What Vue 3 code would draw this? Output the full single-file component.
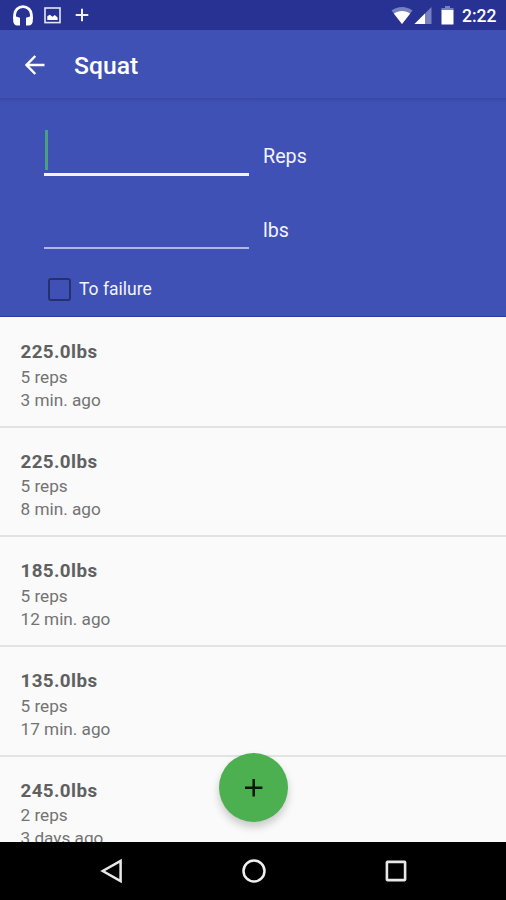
<script setup>
import { ref } from 'vue'

const reps = ref('')
const weight = ref('')
const toFailure = ref(false)

const sets = [
  { weight: '225.0lbs', reps: '5 reps', time: '3 min. ago' },
  { weight: '225.0lbs', reps: '5 reps', time: '8 min. ago' },
  { weight: '185.0lbs', reps: '5 reps', time: '12 min. ago' },
  { weight: '135.0lbs', reps: '5 reps', time: '17 min. ago' },
  { weight: '245.0lbs', reps: '2 reps', time: '3 days ago' }
]
</script>

<template>
  <div class="screen">
    <header class="status">
      <svg class="headphones" width="22" height="22" viewBox="0 0 22 22">
        <path d="M2.600 14V9.800a8.400 8.200 0 0 1 16.800 0V14" fill="none" stroke="#fff" stroke-width="2.800" />
        <path d="M1.200 11.500h2.800l4 1.300v7.800H5.400c-2.400 0-4.200-2-4.200-4.500zM20.800 11.500h-2.800l-4 1.300v7.800h2.600c2.400 0 4.200-2 4.200-4.500z" fill="#fff" />
      </svg>
      <svg class="picture" width="17" height="17" viewBox="0 0 17 17">
        <rect x="1" y="1" width="15" height="14.600" fill="none" stroke="#e4e6f6" stroke-width="1.600" />
        <path d="M3.300 13V9.200l2.500-1.400 2.700 2 2.300-1.800 2.800 2.400V13z" fill="#fff" />
      </svg>
      <svg class="small-plus" width="14" height="14" viewBox="0 0 14 14">
        <path d="M7 .7v12.600M.7 7h12.600" stroke="#f0f1fa" stroke-width="2" />
      </svg>
      <span class="spacer"></span>
      <svg class="wifi" width="22" height="19" viewBox="0 0 22 19">
        <path d="M.5 4.500C6.500-.2 15.500-.2 21.500 4.500L11 18z" fill="#7780c0" />
        <path d="M2.800 7.500C7.500 4 14.500 4 19.200 7.500L11 18z" fill="#fff" />
      </svg>
      <svg class="signal" width="18" height="17" viewBox="0 0 18 17">
        <path d="M17.500 0v17H.5z" fill="#7780c0" />
        <path d="M11 6.500V17H.5z" fill="#fff" />
      </svg>
      <svg class="battery" width="13" height="19" viewBox="0 0 13 19">
        <path d="M4 0h5v2h3.500v3H.5V2H4z" fill="#7780c0" />
        <rect x=".5" y="4" width="12" height="14.500" rx=".6" fill="#fff" />
      </svg>
      <span class="clock">2:22</span>
    </header>

    <nav class="toolbar">
      <svg width="20" height="20" viewBox="0 0 20 20">
        <path d="M19.500 10H1.800M10.300 1 1.500 10l8.800 9" fill="none" stroke="#fff" stroke-width="2.500" />
      </svg>
      <h1>Squat</h1>
    </nav>

    <section class="form">
      <label class="field focused">
        <span class="entry"><i class="caret"></i><input v-model="reps" type="text" /></span>
        <span class="unit">Reps</span>
      </label>
      <label class="field second">
        <span class="entry"><input v-model="weight" type="text" /></span>
        <span class="unit">lbs</span>
      </label>
      <label class="check">
        <input v-model="toFailure" type="checkbox" />
        <span>To failure</span>
      </label>
    </section>

    <main class="list">
      <article v-for="(s, i) in sets" :key="i" class="set">
        <h2>{{ s.weight }}</h2>
        <p>{{ s.reps }}</p>
        <p>{{ s.time }}</p>
      </article>
    </main>

    <button class="fab" aria-label="Add set">
      <svg width="18" height="18" viewBox="0 0 18 18">
        <path d="M8.700 0v17.400M0 8.700h17.400" stroke="#0b160b" stroke-width="2.500" />
      </svg>
    </button>

    <footer class="navbar">
      <svg width="24" height="26" viewBox="0 0 24 26">
        <path d="M20.600 3v20L2.800 13z" fill="none" stroke="#e8e8e8" stroke-width="2.500" />
      </svg>
      <svg width="26" height="24" viewBox="0 0 26 24">
        <circle cx="12" cy="12" r="10.500" fill="none" stroke="#f0f0f0" stroke-width="2.500" />
      </svg>
      <svg width="22" height="22" viewBox="0 0 22 22">
        <rect x="1.900" y="1.900" width="18.200" height="18.200" rx=".5" fill="none" stroke="#e8e8e8" stroke-width="2.600" />
      </svg>
    </footer>
  </div>
</template>

<style>
body {
  margin: 0;
  overflow: hidden;
}
</style>

<style scoped>
* {
  box-sizing: border-box;
}
.screen {
  position: relative;
  display: flex;
  flex-direction: column;
  width: 506px;
  height: 900px;
  overflow: hidden;
  background: #fafafa;
  font-family: Roboto, "Liberation Sans", sans-serif;
}
svg {
  display: block;
  flex: none;
}
.status {
  display: flex;
  flex: none;
  align-items: flex-start;
  height: 30px;
  padding: 0 9px 0 12px;
  background: #283292;
}
.headphones { margin-top: 5px; }
.picture { margin: 7px 0 0 10px; }
.small-plus { margin: 8px 0 0 14px; }
.spacer { flex: 1; }
.wifi { margin-top: 6px; }
.signal { margin: 7px 0 0 1px; }
.battery { margin: 6px 0 0 9px; }
.clock {
  width: 35px;
  margin-left: 8px;
  color: #fff;
  font-size: 17.500px;
  font-weight: 500;
  line-height: 32px;
  white-space: nowrap;
}
.toolbar {
  display: flex;
  flex: none;
  align-items: center;
  height: 68px;
  padding: 1px 0 0 25px;
  background: #3f51b5;
}
.toolbar h1 {
  margin: 3px 0 0 29px;
  color: #fff;
  font-size: 24.700px;
  font-weight: 500;
  line-height: 32px;
}
.form {
  flex: none;
  height: 219px;
  padding: 32px 0 0 44px;
  border-bottom: 1px solid #2c3da2;
  background: linear-gradient(#37479f, #3b4cab 2px, #3f51b5 5px);
}
.field {
  display: flex;
  height: 46px;
}
.second {
  margin-top: 28px;
}
.entry {
  display: flex;
  align-items: flex-start;
  width: 205px;
  height: 45px;
  border-bottom: 2px solid #b1b8e2;
}
.focused .entry {
  height: 46px;
  border-bottom: 3px solid #f1f2fb;
}
.caret {
  width: 3px;
  height: 40px;
  margin-left: 1px;
  background: #4b9d84;
}
.entry input {
  width: 190px;
  height: 40px;
  padding: 0;
  border: 0;
  outline: 0;
  background: transparent;
  color: #fff;
  font: 19px Roboto, sans-serif;
}
.unit {
  margin-left: 14px;
  color: #f2f3fc;
  font-size: 19.700px;
  line-height: 54px;
}
.check {
  display: flex;
  align-items: center;
  height: 26px;
  margin: 26px 0 0 4px;
  color: #f2f3fc;
  font-size: 17.500px;
}
.check input {
  width: 23px;
  height: 23px;
  margin: 0 8px 0 0;
  appearance: none;
  border: 2.500px solid #26306f;
  border-radius: 3px;
}
.list {
  flex: 1;
  min-height: 0;
  padding-top: 1px;
  overflow: hidden;
}
.set {
  height: 109.700px;
  padding: 21px 20px 0 20.500px;
  border-bottom: 2px solid #e3e3e3;
  color: #737373;
}
.set h2 {
  margin: 0;
  color: #606060;
  font-size: 18.800px;
  font-weight: 700;
  line-height: 26px;
  letter-spacing: 0.4px;
}
.set p {
  margin: 0;
  font-size: 17.200px;
  line-height: 23px;
}
.set h2 + p {
  margin-top: 0.500px;
}
.fab {
  position: absolute;
  top: 753px;
  left: 219px;
  display: flex;
  align-items: center;
  justify-content: center;
  width: 69px;
  height: 69px;
  padding: 0;
  border: 0;
  border-radius: 50%;
  background: #4caf50;
  box-shadow: 0 5px 9px rgba(0, 0, 0, 0.2);
}
.navbar {
  display: flex;
  flex: none;
  align-items: center;
  justify-content: space-between;
  height: 58px;
  padding: 0 99px 0 100px;
  background: #000;
}
</style>
